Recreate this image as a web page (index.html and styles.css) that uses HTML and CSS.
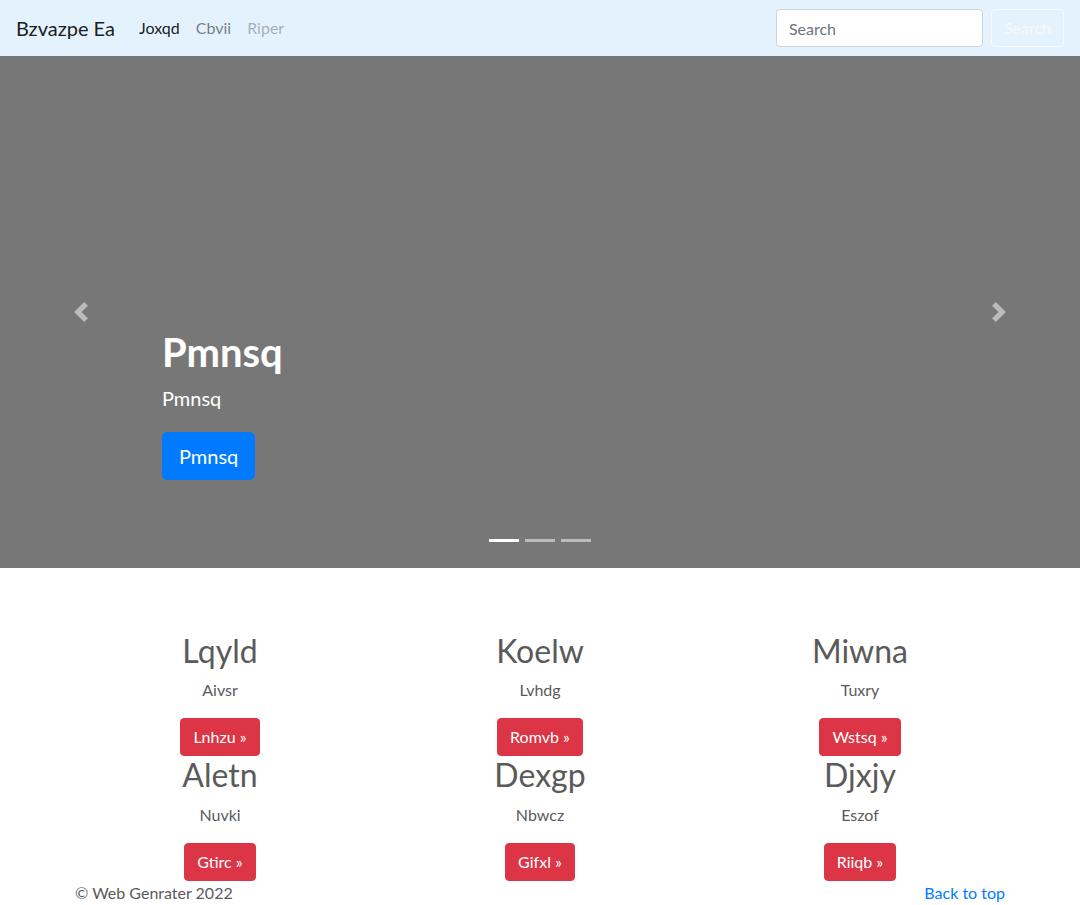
FILE: index.html
```html
<!DOCTYPE html>
<html lang="en">
<head>
<meta charset="utf-8">
<title>Carousel</title>
<link rel="stylesheet" href="styles.css">
</head>
<body>
<header class="navbar">
  <a class="brand" href="#">Bzvazpe Ea</a>
  <ul class="nav">
    <li><a class="nav-link active" href="#">Joxqd</a></li>
    <li><a class="nav-link" href="#">Cbvii</a></li>
    <li><a class="nav-link disabled" href="#">Riper</a></li>
  </ul>
  <form class="search-form">
    <input class="search-input" type="text" placeholder="Search">
    <button class="btn-outline-light" type="button">Search</button>
  </form>
</header>

<main>
  <div class="carousel">
    <div class="carousel-item">
      <div class="carousel-caption">
        <h1>Pmnsq</h1>
        <p>Pmnsq</p>
        <p class="caption-action"><a class="btn-lg-primary" href="#">Pmnsq</a></p>
      </div>
    </div>
    <a class="control control-prev" href="#">
      <svg width="20" height="20" viewBox="0 0 8 8" fill="#fff"><path d="M5.25 0l-4 4 4 4 1.5-1.5L4.25 4l2.5-2.5L5.25 0z"/></svg>
    </a>
    <a class="control control-next" href="#">
      <svg width="20" height="20" viewBox="0 0 8 8" fill="#fff"><path d="M2.75 0l-1.5 1.5L3.75 4l-2.5 2.5L2.75 8l4-4-4-4z"/></svg>
    </a>
    <ol class="indicators">
      <li class="ind active"></li>
      <li class="ind"></li>
      <li class="ind"></li>
    </ol>
  </div>

  <div class="container marketing">
    <div class="row">
      <div class="col"><h2>Lqyld</h2><p>Aivsr</p><p><a class="btn-danger" href="#">Lnhzu »</a></p></div>
      <div class="col"><h2>Koelw</h2><p>Lvhdg</p><p><a class="btn-danger" href="#">Romvb »</a></p></div>
      <div class="col"><h2>Miwna</h2><p>Tuxry</p><p><a class="btn-danger" href="#">Wstsq »</a></p></div>
      <div class="col"><h2>Aletn</h2><p>Nuvki</p><p><a class="btn-danger" href="#">Gtirc »</a></p></div>
      <div class="col"><h2>Dexgp</h2><p>Nbwcz</p><p><a class="btn-danger" href="#">Gifxl »</a></p></div>
      <div class="col"><h2>Djxjy</h2><p>Eszof</p><p><a class="btn-danger" href="#">Riiqb »</a></p></div>
    </div>
  </div>

  <footer class="footer">
    <p>© Web Genrater 2022</p>
    <p><a class="top-link" href="#">Back to top</a></p>
  </footer>
</main>
</body>
</html>
```

FILE: styles.css
```css
* { box-sizing: border-box; }

body {
  margin: 0;
  font-family: "Lato", "Open Sans", sans-serif;
  font-size: 16px;
  line-height: 1.5;
  color: #5a5a5a;
  background: #fff;
}

a { text-decoration: none; }

.navbar {
  display: flex;
  align-items: center;
  height: 56px;
  padding: 8px 16px;
  background: #e3f2fd;
}

.brand {
  font-size: 20px;
  line-height: 30px;
  padding: 5px 0;
  margin-right: 16px;
  color: rgba(0, 0, 0, 0.9);
}

.nav {
  display: flex;
  list-style: none;
  margin: 0;
  padding: 0;
  flex: 1;
}

.nav-link {
  display: block;
  padding: 8px;
  color: rgba(0, 0, 0, 0.5);
}

.nav-link.active { color: rgba(0, 0, 0, 0.9); }
.nav-link.disabled { color: rgba(0, 0, 0, 0.3); }

.search-form {
  display: flex;
  align-items: center;
  gap: 8px;
}

.search-input {
  width: 207px;
  height: 38px;
  padding: 6px 12px;
  font: inherit;
  color: #495057;
  background: #fff;
  border: 1px solid #ced4da;
  border-radius: 4px;
}

.search-input::placeholder { color: #6c757d; }

.btn-outline-light {
  height: 38px;
  padding: 6px 12px;
  font: inherit;
  color: #f8f9fa;
  background: transparent;
  border: 1px solid #f8f9fa;
  border-radius: 4px;
}

.carousel {
  position: relative;
  height: 512px;
  margin-bottom: 64px;
  background: #777;
}

.carousel-item {
  height: 100%;
  display: flex;
  flex-direction: column;
  justify-content: flex-end;
  padding: 0 15% 48px;
}

.carousel-caption {
  position: relative;
  z-index: 10;
  padding: 20px 0;
  color: #fff;
}

.carousel-caption h1 {
  margin: 0 0 8px;
  font-size: 40px;
  font-weight: 700;
  line-height: 1.2;
}

.carousel-caption p {
  margin: 0 0 20px;
  font-size: 20px;
  line-height: 1.4;
}

.carousel-caption .caption-action { line-height: 1; }

.btn-lg-primary {
  display: inline-block;
  padding: 8px 16px;
  font-size: 20px;
  line-height: 30px;
  color: #fff;
  background: #007bff;
  border: 1px solid #007bff;
  border-radius: 5px;
}

.control {
  position: absolute;
  top: 0;
  bottom: 0;
  width: 15%;
  display: flex;
  align-items: center;
  justify-content: center;
  opacity: 0.5;
}

.control-prev { left: 0; }
.control-next { right: 0; }

.indicators {
  position: absolute;
  left: 0;
  right: 0;
  bottom: 26px;
  display: flex;
  justify-content: center;
  gap: 6px;
  list-style: none;
  margin: 0;
  padding: 0;
}

.ind {
  width: 30px;
  height: 3px;
  background: #fff;
  opacity: 0.5;
}

.ind.active { opacity: 1; }

.container {
  width: 960px;
  margin: 0 auto;
}

.row {
  display: grid;
  grid-template-columns: repeat(3, 1fr);
}

.col {
  padding: 0 15px;
  text-align: center;
}

.col h2 {
  margin: 0 0 8px;
  font-size: 32px;
  font-weight: 400;
  line-height: 1.2;
}

.col p { margin: 0 0 16px; }
.col p:last-child { margin-bottom: 0; }

.btn-danger {
  display: inline-block;
  padding: 6px 12px;
  line-height: 24px;
  color: #fff;
  background: #dc3545;
  border: 1px solid #dc3545;
  border-radius: 4px;
}

.footer {
  width: 930px;
  margin: 0 auto;
  display: flex;
  justify-content: space-between;
}

.footer p { margin: 0 0 16px; }

.top-link { color: #007bff; }
```
